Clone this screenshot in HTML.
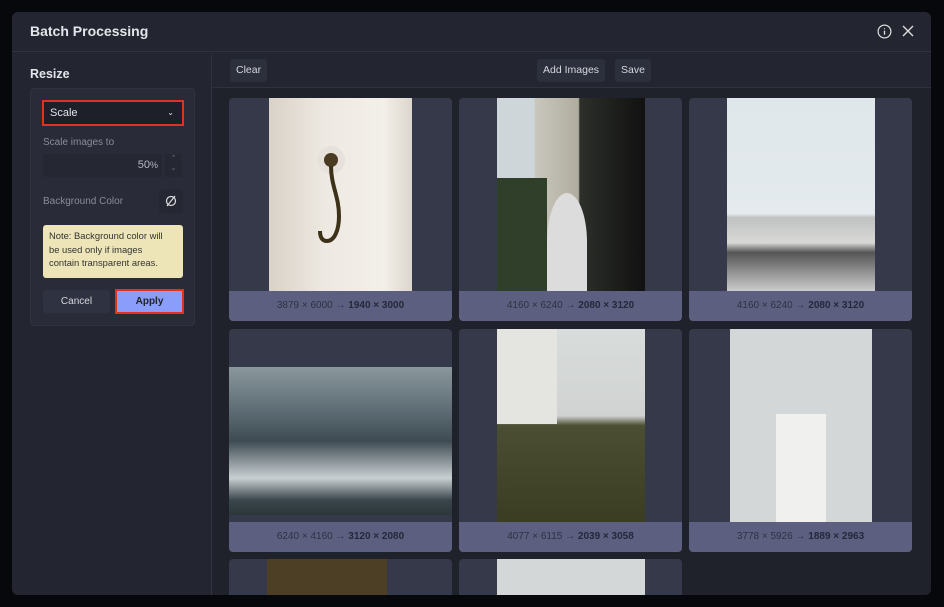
<!DOCTYPE html>
<html><head><meta charset="utf-8"><style>
*{box-sizing:border-box;margin:0;padding:0}
body{width:944px;height:607px;background:#07080b;font-family:"Liberation Sans",sans-serif;position:relative;overflow:hidden}
.modal{position:absolute;left:12px;top:12px;width:919px;height:583px;background:#232531;border-radius:6px;overflow:hidden}
.hdr{position:absolute;left:0;top:0;right:0;height:40px;border-bottom:1px solid #30333f}
.hdr h1{position:absolute;left:18px;top:11px;font-size:14px;color:#e4e5ea;font-weight:bold}
.side{position:absolute;left:0;top:41px;width:200px;bottom:0;border-right:1px solid #30333f}
.side h2{position:absolute;left:18px;top:14px;font-size:12.5px;color:#e4e5ea;font-weight:bold}
.box{position:absolute;left:18px;top:35px;width:165px;height:238px;background:#292b38;border:1px solid #30333f;border-radius:4px}
.a{position:absolute}
.main{position:absolute;left:201px;top:41px;right:0;bottom:0;background:#1f212b;overflow:hidden}
.tb{position:absolute;left:0;top:0;right:0;height:35px;border-bottom:1px solid #30333f;background:#232531}
.btn{position:absolute;top:6px;height:23px;background:#2c2f3c;color:#d6d7de;font-size:10.5px;line-height:23px;padding:0 6px;border-radius:3px}
.card{position:absolute;width:223px;height:223px;background:#363949;border-radius:4px;overflow:hidden}
.cap{position:absolute;left:0;bottom:0;width:100%;height:30px;background:#5d5f80;color:#2f3142;font-size:10px;text-align:center;line-height:30px}
.cap b{color:#25273a}
.img{position:absolute;top:0}
</style></head><body>
<div class="modal">
<div class="hdr"><h1>Batch Processing</h1>
<svg class="a" style="left:865px;top:12px" width="15" height="15" viewBox="0 0 16 16"><circle cx="8" cy="8" r="6.8" fill="none" stroke="#ddd" stroke-width="1.3"/><path d="M8 7v4.5M8 4.5v1" stroke="#ddd" stroke-width="1.4"/></svg>
<svg class="a" style="left:890px;top:13px" width="12" height="12" viewBox="0 0 12 12"><path d="M1 1l10 10M11 1L1 11" stroke="#ddd" stroke-width="1.4"/></svg>
</div>
<div class="side"><h2>Resize</h2>
<div class="box">
<div class="a" style="left:11px;top:11px;width:142px;height:26px;background:#1d1f29;border:2px solid #e0321d;color:#e4e5ea;font-size:11px;line-height:22px;padding-left:6px">Scale<span style="position:absolute;right:8px;font-size:8px">&#8964;</span></div>
<div class="a" style="left:12px;top:48px;font-size:10px;color:#8a8c9a">Scale images to</div>
<div class="a" style="left:12px;top:65px;width:119px;height:23px;background:#252733;color:#b5b7c2;font-size:11px;text-align:right;line-height:23px;padding-right:4px">50<span style="font-size:9px">%</span></div>
<div class="a" style="left:134px;top:65px;width:17px;height:23px;background:#252733;color:#777;font-size:7px;text-align:center;line-height:10px">&#8963;<br>&#8964;</div>
<div class="a" style="left:12px;top:107px;font-size:10px;color:#8a8c9a">Background Color</div>
<div class="a" style="left:128px;top:100px;width:24px;height:24px;background:#252733;border-radius:3px"><svg width="24" height="24"><circle cx="12" cy="12" r="4.5" fill="none" stroke="#ddd" stroke-width="1.2"/><path d="M8 17L16 7" stroke="#ddd" stroke-width="1.2"/></svg></div>
<div class="a" style="left:12px;top:136px;width:140px;height:53px;background:#ede5b8;border-radius:3px;color:#333;font-size:9.4px;line-height:13.5px;padding:4px 6px;white-space:nowrap">Note: Background color will<br>be used only if images<br>contain transparent areas.</div>
<div class="a" style="left:12px;top:201px;width:67px;height:23px;background:#2f3240;border-radius:3px;color:#d6d7de;font-size:10px;text-align:center;line-height:23px">Cancel</div>
<div class="a" style="left:84px;top:200px;width:69px;height:25px;background:#8b9dfb;border:2px solid #e0321d;color:#20222e;font-size:10px;font-weight:bold;text-align:center;line-height:21px">Apply</div>
</div></div>
<div class="main">
<div class="tb"><div class="btn" style="left:17px">Clear</div><div class="btn" style="left:324px">Add Images</div><div class="btn" style="left:402px">Save</div></div>
<div class="card" style="left:16px;top:45px"><div class="img" style="left:40px;width:143px;height:193px;background:linear-gradient(90deg,#d9d2c8,#eee9e2 40%,#f3efe9 80%,#dcd6cd)">
<div class="a" style="left:48px;top:48px;width:28px;height:28px;border-radius:50%;background:#e6e1da"></div>
<svg class="a" style="left:48px;top:50px" width="40" height="110"><circle cx="14" cy="12" r="7" fill="#4a3c22"/><path d="M14 18c0 20 8 30 8 50c0 15-5 25-12 25c-5 0-7-4-7-10" fill="none" stroke="#3d3219" stroke-width="4"/></svg></div><div class="cap">3879 × 6000 → <b>1940 × 3000</b></div></div>
<div class="card" style="left:246px;top:45px"><div class="img" style="left:38px;width:148px;height:193px;background:linear-gradient(90deg,#cfd6da 0,#cfd6da 25%,#c9c6bd 26%,#b0ad9f 55%,#2c2f2a 56%,#111 100%)"><div class="a" style="left:0;top:80px;width:50px;height:113px;background:#2f3f2a"></div><div class="a" style="left:50px;top:95px;width:40px;height:98px;border-radius:50% 50% 0 0;background:#dcdcdc"></div></div><div class="cap">4160 × 6240 → <b>2080 × 3120</b></div></div>
<div class="card" style="left:476px;top:45px"><div class="img" style="left:38px;width:148px;height:193px;background:linear-gradient(#dfe7eb,#e4eaee 60%,#bfc2c1 62%,#d8d8d6 75%,#555 80%,#ccc 100%)"></div><div class="cap">4160 × 6240 → <b>2080 × 3120</b></div></div>
<div class="card" style="left:16px;top:276px"><div class="img" style="left:0;top:38px;width:223px;height:148px;background:linear-gradient(#8a979d,#5d6c74 30%,#3e4b52 50%,#c9d0d3 75%,#3a464b 90%,#2c373c)"></div><div class="cap">6240 × 4160 → <b>3120 × 2080</b></div></div>
<div class="card" style="left:246px;top:276px"><div class="img" style="left:38px;width:148px;height:193px;background:linear-gradient(#d8dcdb,#d0d3d1 45%,#4b4e32 50%,#3b3d22 100%)"><div class="a" style="left:0;top:0;width:60px;height:95px;background:#e4e4e0"></div></div><div class="cap">4077 × 6115 → <b>2039 × 3058</b></div></div>
<div class="card" style="left:476px;top:276px"><div class="img" style="left:41px;width:142px;height:193px;background:#d4d7d8"><div class="a" style="left:46px;top:85px;width:50px;height:108px;background:#f0f0ee"></div></div><div class="cap">3778 × 5926 → <b>1889 × 2963</b></div></div>
<div class="card" style="left:16px;top:506px;height:40px"><div class="img" style="left:38px;width:120px;height:40px;background:#4c3f26"></div></div>
<div class="card" style="left:246px;top:506px;height:40px"><div class="img" style="left:38px;width:148px;height:40px;background:#d3d7d8"></div></div>
</div></div>
</body></html>
